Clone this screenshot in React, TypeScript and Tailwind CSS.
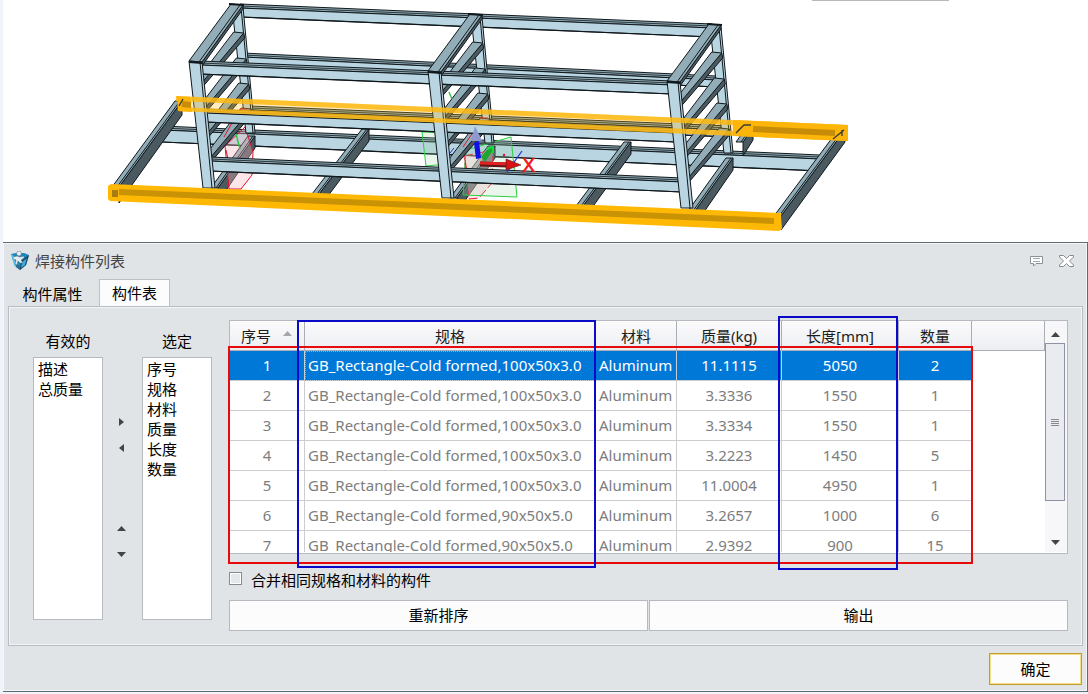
import React from "react";

type Pt = [number, number];

const pts = (list: Pt[]) => list.map((p) => p.join(",")).join(" ");

const LIGHT = "#b9d5e1";
const MID = "#92adb8";
const DARK = "#4b5a61";
const INK = "#10181c";

/* A horizontal beam: dark upper face with a light front face under it. */
function Beam({ x1, y1, x2, y2, h = 10 }: { x1: number; y1: number; x2: number; y2: number; h?: number }) {
  return (
    <g stroke={INK} strokeWidth="1">
      <polygon fill={MID} points={pts([[x1, y1 - 4], [x2, y2 - 4], [x2, y2], [x1, y1]])} />
      <line x1={x1} y1={y1 - 2} x2={x2} y2={y2 - 2} strokeWidth="0.8" />
      <polygon fill={LIGHT} points={pts([[x1, y1], [x2, y2], [x2, y2 + h], [x1, y1 + h]])} />
      <line x1={x1} y1={y1 + h} x2={x2} y2={y2 + h} strokeWidth="1.2" />
    </g>
  );
}

/* A floor member running away from the viewer: lit top, shaded side of height d. */
function Cross({ x1, y1, x2, y2, w = 7, d = 12 }: { x1: number; y1: number; x2: number; y2: number; w?: number; d?: number }) {
  return (
    <g stroke={INK} strokeWidth="1">
      <polygon fill={DARK} points={pts([[x1 + w, y1], [x2 + w, y2], [x2 + w, y2 + d], [x1 + w, y1 + d + 2]])} />
      <polygon fill={MID} points={pts([[x1, y1], [x2, y2], [x2 + w, y2], [x1 + w, y1]])} />
      <line x1={x1 + w - 2} y1={y1} x2={x2 + w - 2} y2={y2} />
    </g>
  );
}

const RUNGS = [27, 53, 78, 103];

/* The far half of an upright frame: back post and the rungs leaning to the front post. */
function FrameBack({ dx, dy }: { dx: number; dy: number }) {
  return (
    <g transform={`translate(${dx} ${dy})`} stroke={INK} strokeWidth="1">
      <polygon fill={LIGHT} points="232,7 243,7 255,133 246,133" />
      <line x1="241" y1="7" x2="253" y2="133" />
      {RUNGS.map((r) => {
        const bx = 231 + r * 0.1;
        const by = 5 + r;
        return (
          <g key={r}>
            <polygon fill={DARK} points={pts([[bx - 32, by + 50], [bx + 10, by + 1], [bx + 11, by + 6], [bx - 32, by + 56]])} />
            <polygon fill={MID} points={pts([[bx - 32, by + 42], [bx, by], [bx + 10, by + 1], [bx - 32, by + 51]])} />
          </g>
        );
      })}
    </g>
  );
}

function FrameFront({ dx, dy }: { dx: number; dy: number }) {
  return (
    <g transform={`translate(${dx} ${dy})`} stroke={INK} strokeWidth="1">
      <polygon fill={DARK} points="202,62 243,5 243,9 202,66" />
      <polygon fill={MID} points="189,61 231,4 243,5 202,62" />
      <line x1="199" y1="62" x2="240" y2="5" />
      <polygon fill={LIGHT} points="189,61 202,62 215,188 203,188" />
      <line x1="200" y1="62" x2="212" y2="188" />
      <line x1="189" y1="62" x2="202" y2="63" strokeWidth="2" />
      <line x1="229" y1="4" x2="244" y2="5" strokeWidth="2" />
    </g>
  );
}

function Viewport() {
  return (
    <svg
      className="block h-[242px] w-full bg-white"
      viewBox="3 0 1085 242"
      preserveAspectRatio="xMinYMin slice"
      role="img"
      aria-label="Frame"
    >
      <rect x="812" y="0" width="137" height="1" fill="#b9b9b9" />

      <Beam x1={240} y1={8} x2={712} y2={28} h={9} />
      <Beam x1={243} y1={57} x2={716} y2={80} h={7} />
      <Beam x1={162} y1={130} x2={820} y2={159} h={12} />
      <Beam x1={250} y1={110} x2={730} y2={130} h={7} />

      <Cross x1={112} y1={187} x2={175} y2={101} d={14} />
      <Cross x1={211} y1={188} x2={248} y2={136} />
      <Cross x1={312} y1={194} x2={362} y2={129} />
      <Cross x1={450} y1={198} x2={488} y2={146} />
      <Cross x1={576} y1={206} x2={624} y2={142} />
      <Cross x1={688} y1={211} x2={726} y2={158} />
      <Cross x1={736} y1={142} x2={746} y2={128} />
      <Cross x1={774} y1={216} x2={838} y2={130} />

      <g fill="#f6b6bf" fillOpacity="0.35" stroke="#e5122d" strokeWidth="1">
        <polygon points="225,146 245,127 253,152 252,175 241,189 229,189" />
        <polygon points="464,156 493,150 492,183 479,198 469,199" strokeDasharray="9 3" />
      </g>
      <g fill="#9fd8a8" fillOpacity="0.22" stroke="#2bd043" strokeWidth="1">
        <polygon points="422,132 446,133 448,164 426,166" />
        <polygon points="466,150 511,137 517,197 463,195" />
      </g>

      <FrameBack dx={0} dy={0} />
      <FrameBack dx={239} dy={10} />
      <FrameBack dx={478} dy={20} />

      <g fill="none" stroke="#e5122d" strokeWidth="1">
        <path d="M224 137l16-28h7M226 150l2 9M463 147l13-19M465 160l2 12M480 118h8" />
        <path d="M236 134l4 15M449 92l3 7" stroke="#25c83c" strokeWidth="1.4" />
        <path d="M450 153l4-5" stroke="#2433db" />
      </g>

      <Beam x1={200} y1={65} x2={672} y2={85} h={9} />
      <Beam x1={205} y1={113} x2={676} y2={133} h={9} />
      <Beam x1={210} y1={161} x2={682} y2={182} h={10} />

      <FrameFront dx={0} dy={0} />
      <FrameFront dx={239} dy={10} />
      <FrameFront dx={478} dy={20} />

      <polygon points="176,96 848,125 848,141 178,111" fill="#ffb90a" fillOpacity="0.25" />
      <polygon points="176,96 848,125 848,130 176,101" fill="#fdb813" fillOpacity="0.85" />
      <polygon points="178,107 848,136 848,141 178,111" fill="#fdb813" fillOpacity="0.85" />
      <polygon points="177,96 190,97 192,112 178,111" fill="#fdb50a" />
      <polygon points="733,120 848,125 848,141 733,136" fill="#fdb50a" />
      <path d="M182 104l9 1M753 129l82 4" stroke="#c88d08" strokeWidth="6" />
      <path d="M179 106l4-7M833 139l11-9M842 130v6M736 133l8-8h7" fill="none" stroke="#3c3c32" strokeWidth="1.4" />

      <polygon points="111,184 781,213 782,229 779,231 110,201 108,199 108,186" fill="#ffb905" />
      <path d="M119 192l655 29" stroke="#ca9205" strokeWidth="6" />
      <rect x="112" y="190" width="6" height="7" fill="#a87d13" />

      <polygon points="475,126 471,141 482,141" fill="#8f99cf" />
      <polygon points="474,143 479,141 481,158 476,159" fill="#1212e6" />
      <polygon points="481,157 490,146 493,150 485,162" fill="#1ba631" />
      <path d="M487 149l6-2v6" fill="none" stroke="#12dd32" strokeWidth="2" />
      <path d="M507 172l15-21" stroke="#2433db" strokeWidth="1.2" />
      <path d="M480 164l28 1" stroke="#5c1515" strokeWidth="5" />
      <path d="M480 163l28 1" stroke="#e02121" strokeWidth="3" />
      <polygon points="506,159 521,165 506,170" fill="#d81313" stroke="#5c1515" strokeWidth="0.6" />
      <circle cx="504" cy="155" r="1.2" fill="#e5122d" />
      <text x="522" y="172" fill="#f01616" stroke="#f01616" strokeWidth="0.5" fontSize="20" fontFamily="Liberation Sans, Arial, sans-serif">
        X
      </text>
    </svg>
  );
}

function AppIcon() {
  return (
    <svg className="h-5 w-[18px]" viewBox="0 0 18 20" aria-hidden="true">
      <path d="M0 3l5-1h8l5 2-3 10-6 5-5-4z" fill="#1b86bd" />
      <path d="M0 3l3 2 2 11-2-2z" fill="#59c4ea" />
      <path d="M18 4l-8 6-1 9 6-5z" fill="#1c3f5a" />
      <path d="M11 11l5-4-2 7-4 3z" fill="#3aaddb" />
      <path d="M5 13l4 2v4l-4-3z" fill="#2b6d93" />
      <circle cx="8" cy="2.500" r="2.400" fill="#e9eff2" stroke="#5c7684" strokeWidth="0.600" />
      <path d="M2 6l4-1 3 1 4-1v2l-3 2 2 3h-3L7 10l-1 4-2-1 1-4-3-1z" fill="#e4edf1" stroke="#4b6879" strokeWidth="0.500" />
    </svg>
  );
}

function Triangle({ dir, className = "" }: { dir: "up" | "down" | "left" | "right"; className?: string }) {
  const shape = {
    up: "0,5 4.5,0 9,5",
    down: "0,0 4.5,5 9,0",
    left: "5,0 0,4 5,8",
    right: "0,0 5,4 0,8",
  }[dir];
  const side = dir === "left" || dir === "right";
  return (
    <svg className={className} width={side ? 5 : 9} height={side ? 8 : 5} viewBox={side ? "0 0 5 8" : "0 0 9 5"} aria-hidden="true">
      <polygon points={shape} fill="currentColor" />
    </svg>
  );
}

function ListBox({ label, id, items }: { label: string; id: string; items: string[] }) {
  return (
    <div className="flex w-[70px] shrink-0 flex-col">
      <label htmlFor={id} className="flex h-[50px] items-end justify-center pb-1.5">
        {label}
      </label>
      <select
        id={id}
        multiple
        className="h-[263px] w-full appearance-none overflow-hidden rounded-none border border-[#b6bac0] bg-white p-0 outline-none"
      >
        {items.map((t) => (
          <option key={t} className="h-5 min-h-0 p-0 pl-1 leading-5">
            {t}
          </option>
        ))}
      </select>
    </div>
  );
}

function ArrowButton({ dir, label }: { dir: "up" | "down" | "left" | "right"; label: string }) {
  return (
    <button type="button" aria-label={label} className="flex h-[26px] w-full items-center justify-center text-[#444]">
      <Triangle dir={dir} />
    </button>
  );
}

const ROWS = [
  ["1", "GB_Rectangle-Cold formed,100x50x3.0", "Aluminum", "11.1115", "5050", "2"],
  ["2", "GB_Rectangle-Cold formed,100x50x3.0", "Aluminum", "3.3336", "1550", "1"],
  ["3", "GB_Rectangle-Cold formed,100x50x3.0", "Aluminum", "3.3334", "1550", "1"],
  ["4", "GB_Rectangle-Cold formed,100x50x3.0", "Aluminum", "3.2223", "1450", "5"],
  ["5", "GB_Rectangle-Cold formed,100x50x3.0", "Aluminum", "11.0004", "4950", "1"],
  ["6", "GB_Rectangle-Cold formed,90x50x5.0", "Aluminum", "3.2657", "1000", "6"],
  ["7", "GB_Rectangle-Cold formed,90x50x5.0", "Aluminum", "2.9392", "900", "15"],
];

const HEADS = ["序号", "规格", "材料", "质量(kg)", "长度[mm]", "数量", ""];

function PartsTable() {
  return (
    <div className="relative">
      <div className="flex h-[234px] border border-[#b6bac0] bg-white pb-px">
        <div className="min-w-0 flex-1 overflow-hidden">
          <table className="w-full table-fixed border-separate border-spacing-0">
            <colgroup>
              <col className="w-[75px]" />
              <col className="w-[291px]" />
              <col className="w-[81px]" />
              <col className="w-[105px]" />
              <col className="w-[117px]" />
              <col className="w-[73px]" />
              <col />
            </colgroup>
            <thead>
              <tr>
                {HEADS.map((h, i) => (
                  <th
                    key={i}
                    className="h-[30px] border-r border-b border-[#a9adb5] bg-linear-to-b from-[#fbfbfc] to-[#eceef2] p-0 font-normal text-[#1c1c1c]"
                  >
                    {i === 0 ? (
                      <span className="flex items-center justify-end gap-3 pr-3">
                        {h}
                        <Triangle dir="up" className="mb-1 text-[#a3a6ad]" />
                      </span>
                    ) : (
                      h
                    )}
                  </th>
                ))}
              </tr>
            </thead>
            <tbody>
              {ROWS.map((row, r) => (
                <tr key={row[0]} className={r === 0 ? "text-white" : "text-[#7d7d7d]"}>
                  {row.map((cell, c) => (
                    <td
                      key={c}
                      className={[
                        "h-[30px] overflow-hidden border-r border-b border-[#cbcdd1] p-0 pb-0.5 whitespace-nowrap",
                        r === 0 ? "bg-[#0078d7]" : "",
                        c === 1 || c === 2 ? "pl-[3px] text-left" : "text-center",
                        r === 0 && c === 1 ? "outline-1 -outline-offset-1 outline-dotted outline-[#d79b62]" : "",
                      ].join(" ")}
                    >
                      {cell}
                    </td>
                  ))}
                  <td />
                </tr>
              ))}
            </tbody>
          </table>
        </div>
        <div className="flex w-[22px] shrink-0 flex-col bg-[#f7f7f9] pr-0.5">
          <button type="button" aria-label="向上滚动" className="flex h-[22px] items-center justify-center pt-1 text-[#444]">
            <Triangle dir="up" />
          </button>
          <div className="flex h-[158px] flex-col items-center justify-center gap-px border border-[#8d93a3] bg-[#e9ebf1]">
            <span className="h-px w-2 bg-[#8a8a8a]" />
            <span className="h-px w-2 bg-[#8a8a8a]" />
            <span className="h-px w-2 bg-[#8a8a8a]" />
            <span className="h-px w-2 bg-[#8a8a8a]" />
          </div>
          <button type="button" aria-label="向下滚动" className="mt-auto flex h-5 items-center justify-center text-[#444]">
            <Triangle dir="down" />
          </button>
        </div>
      </div>

      <div className="pointer-events-none absolute top-[26px] -left-px h-[218px] w-[745px] border-2 border-[#e60a0a]" />
      <div className="pointer-events-none absolute top-0 left-[68px] h-[248px] w-[299px] border-2 border-[#0a0ac8]" />
      <div className="pointer-events-none absolute -top-1 left-[549px] h-[254px] w-[120px] border-2 border-[#0a0ac8]" />
    </div>
  );
}

export default function App() {
  return (
    <div className="flex min-h-screen flex-col bg-[#f0f3fa] pb-[3px] pl-[3px] font-['Noto_Sans','Noto_Sans_CJK_SC',sans-serif] text-[15px] leading-5 text-black">
      <Viewport />
      <main className="flex flex-1 flex-col border-t border-r border-b border-[#5f6a72] bg-[#e1e4e7]">
        <div className="flex flex-1 flex-col border border-[#f4f6f8]">
          <header className="flex h-[35px] items-center pr-3 pb-0.5 pl-[7px] text-[#444]">
            <AppIcon />
            <h1 className="ml-1.5 flex-1">焊接构件列表</h1>
            <button type="button" aria-label="反馈" className="mr-4 flex">
              <svg width="13" height="12" viewBox="0 0 13 12" fill="#fff" stroke="#8a9096" strokeWidth="1" aria-hidden="true">
                <path d="M.5 1.500h12v7H6l-2.500 2.500V8.500h-3z" />
                <path d="M3 3.500h7M3 6.500h7" strokeWidth="0.800" />
              </svg>
            </button>
            <button type="button" aria-label="关闭" className="flex">
              <svg width="15" height="12" viewBox="0 0 15 12" fill="#fff" stroke="#858b92" strokeWidth="1" aria-hidden="true">
                <path d="M.5.5h4l3 3 3-3h4v1.500l-4 4 4 4v1.500h-4l-3-3-3 3h-4V10l4-4-4-4z" />
              </svg>
            </button>
          </header>

          <div role="tablist" className="flex h-[27px] pl-1">
            <button type="button" role="tab" aria-selected="false" className="flex w-[91px] items-center justify-center pt-0.5 pr-0.5">
              构件属性
            </button>
            <button
              type="button"
              role="tab"
              aria-selected="true"
              className="flex w-[71px] items-center justify-center border border-b-0 border-[#bcc1c8] bg-[#fcfcfd]"
            >
              构件表
            </button>
          </div>

          <section className="mr-[3px] ml-1 flex flex-1 border border-[#b8bdc5] pr-[14px] pb-3.5 pl-6 ring-1 ring-[#f2f4f6] ring-inset">
            <ListBox id="available" label="有效的" items={["描述", "总质量"]} />
            <div className="flex w-[39px] shrink-0 flex-col pt-[102px] pr-0.5">
              <ArrowButton dir="right" label="添加" />
              <ArrowButton dir="left" label="移除" />
              <div className="h-[54px]" />
              <ArrowButton dir="up" label="上移" />
              <ArrowButton dir="down" label="下移" />
            </div>
            <ListBox id="selected" label="选定" items={["序号", "规格", "材料", "质量", "长度", "数量"]} />

            <div className="ml-[17px] flex min-w-0 flex-1 flex-col pt-[13px]">
              <PartsTable />
              <label className="mt-4 flex h-5 items-center gap-[9px] self-start">
                <input
                  type="checkbox"
                  className="mb-1 size-[13px] appearance-none border border-[#858b93] bg-[#e4e8ec] ring-1 ring-white ring-inset"
                />
                合并相同规格和材料的构件
              </label>
              <div className="mt-2.5 grid grid-cols-2 gap-px">
                <button type="button" className="h-[31px] border border-[#b6bac0] bg-[#fcfcfd] pb-0.5">
                  重新排序
                </button>
                <button type="button" className="h-[31px] border border-[#b6bac0] bg-[#fcfcfd] pb-0.5">
                  输出
                </button>
              </div>
            </div>
          </section>

          <footer className="flex h-11 items-start justify-end pt-[7px] pr-1">
            <button type="button" className="h-8 w-[93px] border border-[#c79a2c] bg-[#fcfcfd] ring-1 ring-[#f5e08a] ring-inset">
              确定
            </button>
          </footer>
        </div>
      </main>
    </div>
  );
}
